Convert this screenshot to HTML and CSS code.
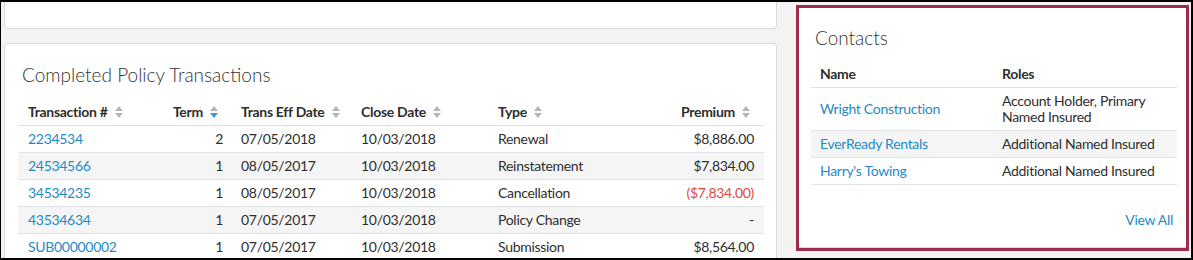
FILE: index.html
```html
<!DOCTYPE html>
<html>
<head>
<meta charset="utf-8">
<link rel="stylesheet" href="styles.css">
</head>
<body>
<div class="frame">
  <div class="left-col">
    <div class="card card-top"></div>
    <div class="card card-main">
      <h2 class="card-title">Completed Policy Transactions</h2>
      <table class="grid tx">
        <colgroup>
          <col class="c-num"><col class="c-term"><col class="c-eff"><col class="c-close"><col class="c-type"><col class="c-prem">
        </colgroup>
        <thead>
          <tr>
            <th>Transaction # <svg class="sort" width="8" height="12" viewBox="0 0 8 12"><path class="up" d="M0 5 L4 0 L8 5 Z"/><path class="down" d="M0 7 L8 7 L4 12 Z"/></svg></th>
            <th class="num-h">Term <svg class="sort active" width="8" height="12" viewBox="0 0 8 12"><path class="up" d="M0 5 L4 0 L8 5 Z"/><path class="down" d="M0 7 L8 7 L4 12 Z"/></svg></th>
            <th>Trans Eff Date <svg class="sort" width="8" height="12" viewBox="0 0 8 12"><path class="up" d="M0 5 L4 0 L8 5 Z"/><path class="down" d="M0 7 L8 7 L4 12 Z"/></svg></th>
            <th>Close Date <svg class="sort" width="8" height="12" viewBox="0 0 8 12"><path class="up" d="M0 5 L4 0 L8 5 Z"/><path class="down" d="M0 7 L8 7 L4 12 Z"/></svg></th>
            <th>Type <svg class="sort" width="8" height="12" viewBox="0 0 8 12"><path class="up" d="M0 5 L4 0 L8 5 Z"/><path class="down" d="M0 7 L8 7 L4 12 Z"/></svg></th>
            <th class="num-h">Premium <svg class="sort" width="8" height="12" viewBox="0 0 8 12"><path class="up" d="M0 5 L4 0 L8 5 Z"/><path class="down" d="M0 7 L8 7 L4 12 Z"/></svg></th>
          </tr>
        </thead>
        <tbody>
          <tr><td><a href="#">2234534</a></td><td class="num">2</td><td>07/05/2018</td><td>10/03/2018</td><td>Renewal</td><td class="num">$8,886.00</td></tr>
          <tr><td><a href="#">24534566</a></td><td class="num">1</td><td>08/05/2017</td><td>10/03/2018</td><td>Reinstatement</td><td class="num">$7,834.00</td></tr>
          <tr><td><a href="#">34534235</a></td><td class="num">1</td><td>08/05/2017</td><td>10/03/2018</td><td>Cancellation</td><td class="num neg">($7,834.00)</td></tr>
          <tr><td><a href="#">43534634</a></td><td class="num">1</td><td>07/05/2017</td><td>10/03/2018</td><td>Policy Change</td><td class="num dash">-</td></tr>
          <tr><td><a href="#">SUB00000002</a></td><td class="num">1</td><td>07/05/2017</td><td>10/03/2018</td><td>Submission</td><td class="num">$8,564.00</td></tr>
        </tbody>
      </table>
    </div>
  </div>
  <div class="right-col">
    <div class="card contacts">
      <h2 class="card-title">Contacts</h2>
      <table class="grid ct">
        <colgroup><col class="c-name"><col class="c-roles"></colgroup>
        <thead><tr><th>Name</th><th>Roles</th></tr></thead>
        <tbody>
          <tr><td><a href="#">Wright Construction</a></td><td>Account Holder, Primary Named Insured</td></tr>
          <tr><td><a href="#">EverReady Rentals</a></td><td>Additional Named Insured</td></tr>
          <tr><td><a href="#">Harry's Towing</a></td><td>Additional Named Insured</td></tr>
        </tbody>
      </table>
      <div class="view-all"><a href="#">View All</a></div>
    </div>
  </div>
</div>
</body>
</html>
```

FILE: styles.css
```css
* { box-sizing: border-box; }
html, body { margin: 0; padding: 0; }
body {
  font-family: "Lato", "Liberation Sans", sans-serif;
  font-size: 14px;
  letter-spacing: -0.3px;
  color: #2e2e2e;
}
a { color: #1f8ac6; text-decoration: none; }

.frame {
  width: 1193px;
  height: 260px;
  border-style: solid;
  border-color: #000;
  border-width: 2px 2px 2px 1px;
  background: #f3f3f3;
  display: grid;
  grid-template-columns: 773px 1fr;
  column-gap: 19px;
  padding: 0 2px 0 3px;
  overflow: hidden;
}

.left-col {
  display: flex;
  flex-direction: column;
  gap: 14px;
  min-height: 0;
}

.card {
  background: #fff;
  border: 1px solid #d6dbe1;
  border-radius: 4px;
}
.card-top {
  height: 27px;
  border-top: none;
  border-radius: 0 0 4px 4px;
  flex: none;
}
.card-main {
  flex: 1;
  border-bottom: none;
  border-radius: 4px 4px 0 0;
  padding: 19px 12px 0 13px;
  overflow: hidden;
}

.card-title {
  margin: 0 0 0 4px;
  font-size: 19px;
  line-height: 24px;
  font-weight: 300;
  letter-spacing: 0;
  color: #333;
}

.grid {
  width: 100%;
  border-collapse: collapse;
  table-layout: fixed;
}
.grid th {
  text-align: left;
  font-weight: 700;
  font-size: 14px;
  line-height: 16px;
  padding: 4px 10px 4px 10px;
  height: 25px;
  border-bottom: 1px solid #dde1e5;
  white-space: nowrap;
}
.grid td {
  padding: 5px 10px;
  line-height: 16px;
  border-bottom: 1px solid #e2e5e8;
  vertical-align: middle;
}
.grid tbody tr:nth-child(even) td { background: #f5f5f5; }

.tx { margin-top: 13px; }
.c-num { width: 132px; }
.c-term { width: 81px; }
.c-eff { width: 120px; }
.c-close { width: 137px; }
.c-type { width: 132px; }

.tx .num { text-align: right; padding-right: 8px; }
.tx .num-h { text-align: right; padding-right: 13px; }
.tx td.num:last-child { padding-right: 10px; }
.tx th.num-h:last-child { padding-right: 14px; }
.neg { color: #e2493f; }

.sort {
  display: inline-block;
  vertical-align: -1px;
  margin-left: 4px;
}
.sort path { fill: #b3b7bc; }
.sort.active .down { fill: #3a9ad9; }

.right-col {
  padding: 3px 0 7px 0;
  min-height: 0;
}
.contacts {
  height: 100%;
  border: 3px solid #9e2a4c;
  border-radius: 0;
  box-shadow: inset 0 -1px 0 #d6dbe1;
  padding: 18px 9px 0 12px;
}
.ct { margin-top: 12px; }
.ct th, .ct td { padding-left: 9px; padding-right: 9px; }
.c-name { width: 182px; }
.view-all {
  margin-top: 25px;
  text-align: right;
  padding-right: 4px;
  line-height: 20px;
}
```
